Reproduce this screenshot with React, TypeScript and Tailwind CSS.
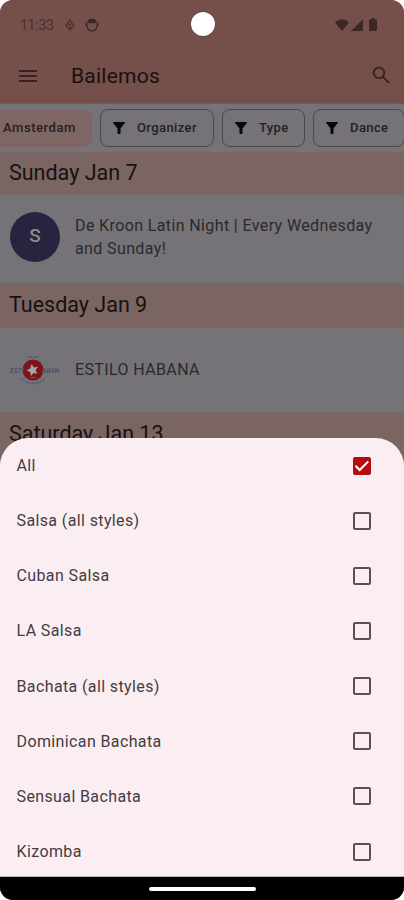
import React, { useState } from 'react';

const FILTERS = [
  { label: 'Organizer', box: 'w-[114px]' },
  { label: 'Type', box: 'w-[83px]' },
  { label: 'Dance', box: 'w-[92px]' },
];

const STYLES = [
  'All',
  'Salsa (all styles)',
  'Cuban Salsa',
  'LA Salsa',
  'Bachata (all styles)',
  'Dominican Bachata',
  'Sensual Bachata',
  'Kizomba',
];

function StatusBar() {
  return (
    <div className="flex h-[49px] items-center pl-5 pr-[27px] text-[#3c2724]">
      <span className="w-[34px] whitespace-nowrap pt-px text-[14px] leading-none tracking-[-0.25px] text-[#4a312d]">11:33</span>
      <svg className="ml-[11px] h-3 w-[10px]" viewBox="0 0 10 12" fill="none" stroke="#4a312d" strokeWidth="1.2">
        <path d="M5 .8 7 3.5 5 6 3 3.5ZM2.8 4.5 1 6.3 5 11l4-4.7-1.8-1.8M5 6v4" />
      </svg>
      <svg className="ml-[10px] h-[14px] w-[14px]" viewBox="0 0 14 14" fill="none" stroke="currentColor" strokeWidth="1.2">
        <path d="M2.2 4.500C.8 7.500 2 12.800 7 12.800S13.200 7.500 11.800 4.500" />
        <path d="M2.300 4.500Q3 .8 7 .8t4.700 3.700L9 5.500 7 4.700l-2 .8Z" fill="currentColor" stroke="none" />
        <path d="M0 5.500 2 8M14 5.500 12 8" />
      </svg>
      <svg className="ml-auto h-3 w-[14px]" viewBox="0 0 14 12" fill="currentColor">
        <path d="M0 3.500Q7-3 14 3.500L7 12Z" />
      </svg>
      <svg className="ml-[2px] h-3 w-3" viewBox="0 0 12 12" fill="currentColor">
        <path d="M12 0v12H0Z" />
      </svg>
      <svg className="ml-[6px] h-[13px] w-2" viewBox="0 0 8 13" fill="currentColor">
        <path d="M2.500 0h3v1.300H7q1 0 1 1V12q0 1-1 1H1q-1 0-1-1V2.300q0-1 1-1h1.500Z" />
      </svg>
    </div>
  );
}

function AppBar() {
  return (
    <div className="flex h-[53px] items-center pl-[19px] pr-[14px]">
      <svg className="h-3 w-[18px]" viewBox="0 0 18 12" stroke="#37231f" strokeWidth="1.9">
        <path d="M0 1h18M0 6h18M0 11h18" />
      </svg>
      <h1 className="ml-[34px] pt-0.5 text-[21px] leading-none tracking-[0.25px] text-[#1a1010]">Bailemos</h1>
      <svg className="ml-auto mb-px h-[18px] w-[18px]" viewBox="0 0 18 18" fill="none" stroke="#37231f" strokeWidth="1.9">
        <circle cx="7" cy="6.800" r="5.300" />
        <path d="m11 10.800 6 6" />
      </svg>
    </div>
  );
}

function FilterChips() {
  return (
    <div className="flex h-[48px] items-center gap-2 overflow-hidden bg-[#757377] text-[13px] font-medium tracking-[0.4px] text-[#242023]">
      <div className="flex h-[37px] w-[92px] shrink-0 items-center rounded-r-lg bg-[#7e6664] pl-[3px] tracking-[0.55px]">Amsterdam</div>
      {FILTERS.map(({ label, box }) => (
        <div key={label} className={`flex h-[38px] shrink-0 items-center rounded-lg border border-[#4b494c] pl-3 ${box}`}>
          <svg className="h-3 w-3 shrink-0" viewBox="0 0 12 12" fill="#09080a">
            <path d="M.5 0h11q.8.3.3 1L7.500 6.500V11q0 1-1 1h-1q-1 0-1-1V6.500L.2 1Q-.3.3.5 0Z" />
          </svg>
          <span className="ml-3">{label}</span>
        </div>
      ))}
    </div>
  );
}

function DateHeader({ children, className }: { children: string; className: string }) {
  return (
    <h2 className={`bg-[#7a6563] pl-[9px] text-[21.5px] text-[#161112] ${className}`}>{children}</h2>
  );
}

function HabanaLogo() {
  return (
    <svg className="h-[50px] w-[50px]" viewBox="0 0 50 50">
      <circle cx="23" cy="25" r="10.500" fill="#7c1519" />
      <path d="m21.500 19 2.400 3.500 4.100-.8-2.500 3.500 2 3.500-4-.8-2.700 3.100-.5-4-3.800-1.800 3.800-1.800Z" fill="#aaa2a5" />
      <path d="M17.500 12h11" stroke="#555b74" strokeWidth="1.600" strokeDasharray="2 .6" />
      <path d="M10.500 33Q23 44 35.500 33" fill="none" stroke="#555c76" strokeWidth="1.800" strokeDasharray="2 1" />
      <g fill="#474c69" fontSize="6.500" fontStyle="italic" fontWeight="500">
        <text x="0" y="27.500" textLength="14">ESTI</text>
        <text x="32" y="27.500" textLength="17">ABAN</text>
      </g>
      <path d="M20 32.500h6" stroke="#8b4a34" strokeWidth="1" />
    </svg>
  );
}

function Checkbox({ checked, onClick }: { checked: boolean; onClick: () => void }) {
  return (
    <button
      role="checkbox"
      aria-checked={checked}
      onClick={onClick}
      className={`flex h-[18px] w-[18px] items-center justify-center rounded-[2px] ${checked ? 'bg-[#b50c12]' : 'border-2 border-[#5e5054]'}`}
    >
      {checked && (
        <svg className="h-[18px] w-[18px]" viewBox="0 0 18 18" fill="none" stroke="#fff" strokeWidth="2">
          <path d="m2.500 8.700 4.200 4.300 8.600-8.600" />
        </svg>
      )}
    </button>
  );
}

function StyleSheet() {
  const [selected, setSelected] = useState('All');

  return (
    <div className="absolute inset-x-0 top-[438px] bottom-[23px] overflow-hidden rounded-t-[28px] border-b border-[#bcb3b6] bg-[#faeef2]">
      {STYLES.map(name => (
        <div key={name} className="flex h-[55.15px] items-center justify-between pl-[16.5px] pr-[33.5px]">
          <span className="pt-px text-[16px] tracking-[0.38px] text-[#463c40]">{name}</span>
          <Checkbox checked={selected === name} onClick={() => setSelected(name)} />
        </div>
      ))}
    </div>
  );
}

export default function App() {
  return (
    <div className="h-[900px] w-[404px] bg-white font-['Roboto',sans-serif]">
      <div className="relative flex h-full flex-col overflow-hidden rounded-[13px] bg-[#757377]">
        <header className="h-[104px] shrink-0 border-b border-[#805450] bg-[#754f49]">
          <StatusBar />
          <AppBar />
        </header>
        <div className="absolute left-[191px] top-3 h-6 w-6 rounded-full bg-white shadow-[0_0_1px_#222]" />

        <FilterChips />
        <DateHeader className="h-[43px] leading-[41px]">Sunday Jan 7</DateHeader>
        <div className="flex h-[88px] items-center pl-[10px]">
          <div className="mb-[5px] flex h-[50px] w-[50px] items-center justify-center rounded-full bg-[#28233f] text-[19px] font-medium text-[#8c8992]">S</div>
          <p className="mb-1 ml-[15px] w-[310px] text-[16px] leading-[23px] tracking-[0.38px] text-[#2b292c]">
            De Kroon Latin Night | Every Wednesday and Sunday!
          </p>
        </div>
        <DateHeader className="h-[45px] leading-[44px]">Tuesday Jan 9</DateHeader>
        <div className="flex h-[84px] items-center pl-[10px]">
          <HabanaLogo />
          <p className="ml-[15px] text-[16px] tracking-[0.38px] text-[#2b292c]">ESTILO HABANA</p>
        </div>
        <DateHeader className="h-[50px] leading-[43px]">Saturday Jan 13</DateHeader>

        <StyleSheet />
        <div className="absolute inset-x-0 bottom-0 flex h-[23px] items-center justify-center bg-black">
          <div className="h-1 w-[107px] rounded-full bg-white" />
        </div>
      </div>
    </div>
  );
}
